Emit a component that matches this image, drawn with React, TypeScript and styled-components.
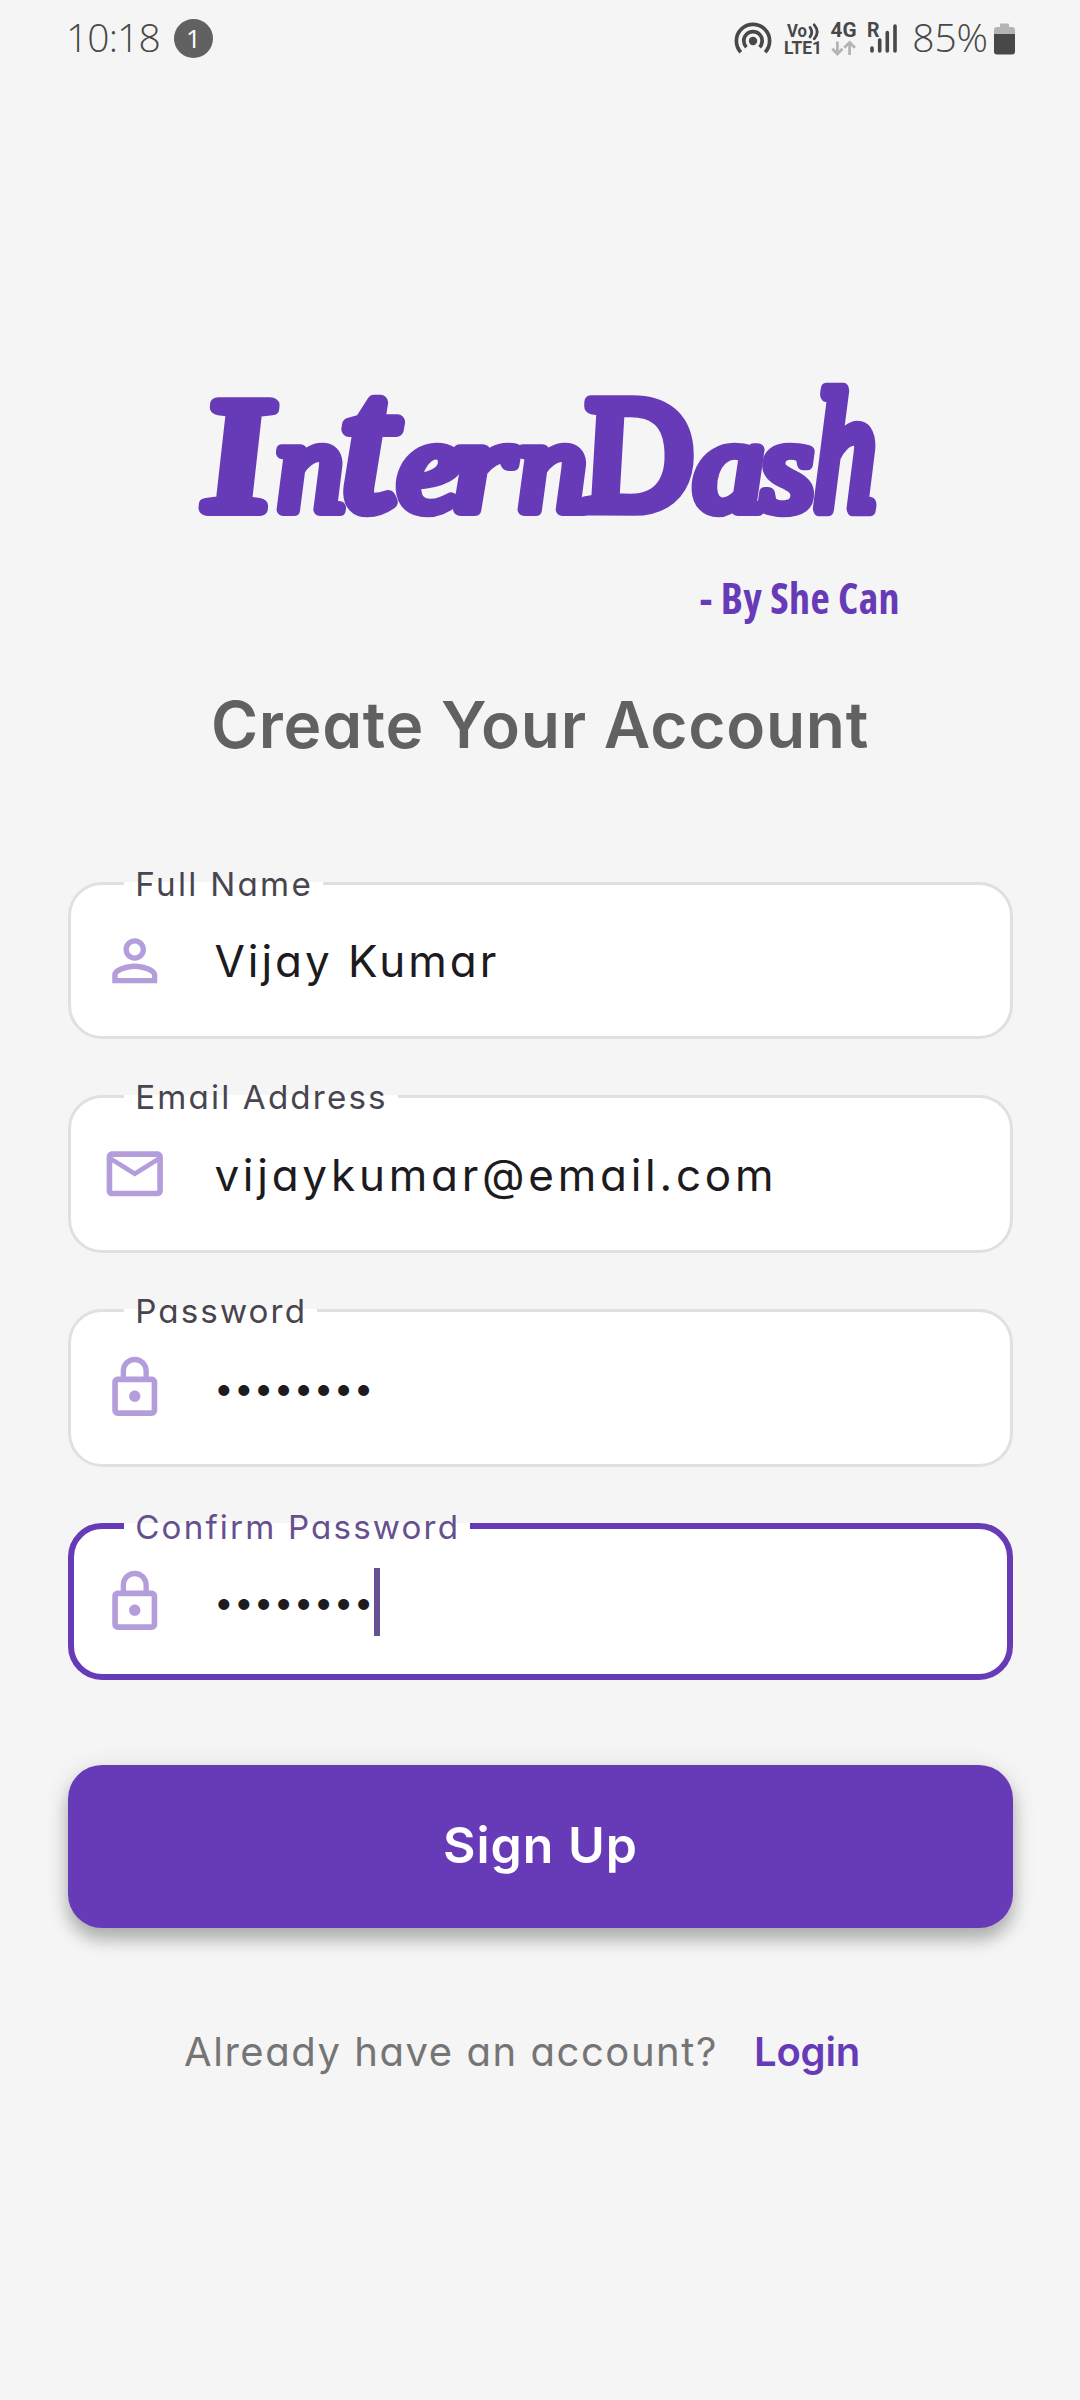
import React from "react";
import styled, { createGlobalStyle, css } from "styled-components";
import { MdLockOutline, MdMailOutline, MdPersonOutline } from "react-icons/md";

const color = {
  page: "#f5f5f5",
  primary: "#673ab7",
  focus: "#67508f",
  icon: "#b39ddb",
  line: "#e0e0e0",
  status: "#484848",
  faint: "#b4b4b4",
};

const GlobalStyle = createGlobalStyle`
  * { box-sizing: border-box; }
  body { margin: 0; background: ${color.page}; }
`;

const Screen = styled.main`
  width: 1080px;
  height: 2400px;
  overflow: hidden;
  display: flex;
  flex-direction: column;
  background: ${color.page};
  font-family: Inter, "Open Sans", sans-serif;
  font-feature-settings: "cv11";
`;

/* ---------- status bar ---------- */

const StatusBar = styled.header`
  height: 74px;
  padding: 0 64px 0 66px;
  display: flex;
  align-items: center;
  justify-content: space-between;
  color: ${color.status};
  font-family: "Open Sans", "Noto Sans", sans-serif;
`;

const StatusGroup = styled.div`
  display: flex;
  align-items: center;
`;

const StatusText = styled.span<{ $spacing?: number }>`
  font-size: 39px;
  font-weight: 360;
  line-height: 60px;
  letter-spacing: ${(p) => p.$spacing ?? 0}px;
`;

const Badge = styled.span`
  width: 39px;
  height: 39px;
  margin: 3px 0 0 14px;
  border-radius: 50%;
  display: flex;
  align-items: center;
  justify-content: center;
  background: #616161;
  color: #fff;
  font-size: 26px;
  line-height: 39px;
`;

const Signals = styled.svg`
  width: 180px;
  height: 74px;
  margin-right: 1px;
  font-family: Roboto, sans-serif;
  font-weight: 700;
`;

const Battery = styled.svg`
  width: 22px;
  height: 74px;
  margin-left: 6px;
`;

const SignalIcons = () => (
  <Signals viewBox="730 0 180 74" fill={color.status}>
    <g fill="none" stroke={color.status} strokeWidth="3.7">
      <path d="M739.8 52.2A16.6 16.6 0 1 1 764.2 52.2" />
      <path d="M745.4 47.2A9.2 9.2 0 1 1 758.6 47.2" />
    </g>
    <circle cx="752" cy="41" r="4.2" />
    <text x="786" y="36.7" fontSize="17.5" textLength="20" lengthAdjust="spacingAndGlyphs">Vo</text>
    <g fill="none" stroke={color.status} strokeWidth="2.8" strokeLinecap="round">
      <path d="M809 27.4q3.6 4.6 0 9.4" />
      <path d="M813.2 24.8q6 7 0 14" />
    </g>
    <text x="783" y="54.3" fontSize="17.5" textLength="38" lengthAdjust="spacingAndGlyphs">LTE1</text>
    <text x="829.5" y="37" fontSize="19.5" textLength="26" lengthAdjust="spacingAndGlyphs">4G</text>
    <g fill="none" stroke={color.faint} strokeWidth="2.8">
      <path d="M836.4 41.5V54M831.3 48.8l5.1 5.2 5.1-5.2" />
      <path d="M848.6 55V42.5M843.2 47.7l5.4-5.2 5.4 5.2" />
    </g>
    <text x="866" y="37" fontSize="19.5">R</text>
    <g stroke={color.status} strokeWidth="3.6" strokeLinecap="round">
      <path d="M871 48V51M878.7 40V51M886.3 32.5V51M894 26V51" />
    </g>
  </Signals>
);

const BatteryIcon = () => (
  <Battery viewBox="994 0 22 74">
    <path d="M1000 24.5q0-1 1-1h7q1 0 1 1V27h3q3 0 3 3v5h-21v-5q0-3 3-3h3z" fill={color.faint} />
    <path d="M994 34h21v17.5q0 3-3 3h-15q-3 0-3-3z" fill={color.status} />
  </Battery>
);

/* ---------- branding ---------- */

const Wordmark = styled.svg`
  width: 1080px;
  height: 228px;
  margin-top: 266px;
  font-family: "Liberation Serif", serif;
  font-style: italic;
  fill: ${color.primary};
  stroke: ${color.primary};
  stroke-linejoin: round;
  stroke-linecap: round;
`;

type Letter = {
  glyph: string;
  x: number;
  size: number;
  wide: number;
  tall?: number;
  skew?: number;
  pen?: number;
};

const letters: Letter[] = [
  { glyph: "I", x: 208, size: 160, wide: 1.24, pen: 14 },
  { glyph: "n", x: 278, size: 130, wide: 1.04, skew: 3 },
  { glyph: "t", x: 342, size: 162, wide: 1.18, tall: 1.16, skew: 1, pen: 13 },
  { glyph: "e", x: 399, size: 130, wide: 1.1, skew: 3 },
  { glyph: "r", x: 454, size: 130, wide: 1.25, skew: 3 },
  { glyph: "n", x: 519, size: 130, wide: 1.08, skew: 3 },
  { glyph: "D", x: 587, size: 161, wide: 0.93, pen: 15 },
  { glyph: "a", x: 695, size: 130, wide: 1.1, skew: 3 },
  { glyph: "s", x: 762, size: 130, wide: 1.06, skew: 3 },
  { glyph: "h", x: 814, size: 155, wide: 0.8, tall: 1.1, skew: 0, pen: 14 },
];

const Logo = () => (
  <Wordmark viewBox="0 340 1080 228">
    {letters.map(({ glyph, x, size, wide, tall = 1, skew = 6, pen = 12 }, i) => (
      <text
        key={i}
        fontSize={size}
        strokeWidth={pen}
        transform={`translate(${x} ${515.5 - (pen / 2) * tall}) skewX(${skew}) scale(${wide} ${tall})`}
      >
        {glyph}
      </text>
    ))}
  </Wordmark>
);

const Tagline = styled.p`
  margin: 0 180px 0 0;
  align-self: flex-end;
  color: ${color.primary};
  font: 750 42px/60px "Open Sans", sans-serif;
  font-stretch: condensed;
  letter-spacing: 0.4px;
`;

const Title = styled.h1`
  margin: 52px 0 0;
  text-align: center;
  color: #616161;
  font-size: 64px;
  font-weight: 570;
  line-height: 90px;
  letter-spacing: 0.75px;
`;

/* ---------- form ---------- */

const Form = styled.form`
  margin: 111.6px 67.5px 0;
  display: flex;
  flex-direction: column;
  gap: 56.25px;
`;

const Field = styled.div<{ $focused?: boolean }>`
  position: relative;
  height: 157.5px;
  padding-left: ${(p) => (p.$focused ? 27.4 : 30.4)}px;
  display: flex;
  align-items: center;
  border: ${(p) => (p.$focused ? `6px solid ${color.primary}` : `3px solid ${color.line}`)};
  border-radius: 34px;
  background: #fff;
  --edge: ${(p) => (p.$focused ? 6 : 3)}px;

  svg {
    width: 67.5px;
    height: 67.5px;
    color: ${color.icon};
  }
`;

const Label = styled.label<{ $focused?: boolean; $spacing: number }>`
  position: absolute;
  top: ${(p) => (p.$focused ? -25 : -24)}px;
  left: calc(56.2px - var(--edge));
  padding: 0 10px 0 11.5px;
  color: ${(p) => (p.$focused ? color.focus : "#49454f")};
  font-size: 33.2px;
  line-height: 46px;
  letter-spacing: ${(p) => p.$spacing}px;
  white-space: nowrap;
  background: linear-gradient(#fff, #fff) 0 ${(p) => (p.$focused ? 19 : 21)}px / 100% 8px no-repeat;
`;

const Value = styled.span<{ $spacing: number }>`
  margin: 1px 0 0 46px;
  color: #1d1b20;
  font-size: 44px;
  line-height: 68px;
  letter-spacing: ${(p) => p.$spacing}px;
`;

const Secret = styled(Value)`
  margin: 1px 0 0 45.5px;
  font-size: 35px;
`;

const Caret = styled.i`
  width: 5.6px;
  height: 67.5px;
  margin: 1px 0 0 0.4px;
  background: ${color.focus};
`;

const SubmitButton = styled.button`
  height: 163px;
  margin: 84.4px 67.5px 0;
  padding: 0 0 2px 1px;
  border: 0;
  border-radius: 34px;
  background: ${color.primary};
  color: #fff;
  font: 600 50px/70px Inter, sans-serif;
  font-feature-settings: "cv11";
  letter-spacing: 1px;
  box-shadow: 0 12px 16px rgba(0, 0, 0, 0.22), 0 5px 26px rgba(0, 0, 0, 0.13);
`;

/* ---------- footer ---------- */

const footerText = css`
  font-size: 40px;
  line-height: 60px;
`;

const Footer = styled.footer`
  margin-top: 94px;
  padding-left: 184px;
  display: flex;
  align-items: baseline;
  color: #757575;
`;

const Question = styled.span`
  ${footerText}
  width: 570px;
  letter-spacing: 1.55px;
`;

const LoginLink = styled.a`
  ${footerText}
  color: ${color.primary};
  font-weight: 600;
  letter-spacing: -0.2px;
`;

export default function App() {
  return (
    <Screen>
      <GlobalStyle />
      <StatusBar>
        <StatusGroup>
          <StatusText $spacing={-0.9}>10:18</StatusText>
          <Badge>1</Badge>
        </StatusGroup>
        <StatusGroup>
          <SignalIcons />
          <StatusText $spacing={-0.1}>85%</StatusText>
          <BatteryIcon />
        </StatusGroup>
      </StatusBar>

      <Logo />
      <Tagline>- By She Can</Tagline>
      <Title>Create Your Account</Title>

      <Form>
        <Field>
          <Label $spacing={2.3}>Full Name</Label>
          <MdPersonOutline />
          <Value $spacing={3}>Vijay Kumar</Value>
        </Field>
        <Field>
          <Label $spacing={2.15}>Email Address</Label>
          <MdMailOutline />
          <Value $spacing={3.75}>vijaykumar@email.com</Value>
        </Field>
        <Field>
          <Label $spacing={2.1}>Password</Label>
          <MdLockOutline />
          <Secret $spacing={0.3}>••••••••</Secret>
        </Field>
        <Field $focused>
          <Label $focused $spacing={2.15}>Confirm Password</Label>
          <MdLockOutline />
          <Secret $spacing={0.3}>••••••••</Secret>
          <Caret />
        </Field>
      </Form>

      <SubmitButton type="button">Sign Up</SubmitButton>

      <Footer>
        <Question>Already have an account?</Question>
        <LoginLink>Login</LoginLink>
      </Footer>
    </Screen>
  );
}
